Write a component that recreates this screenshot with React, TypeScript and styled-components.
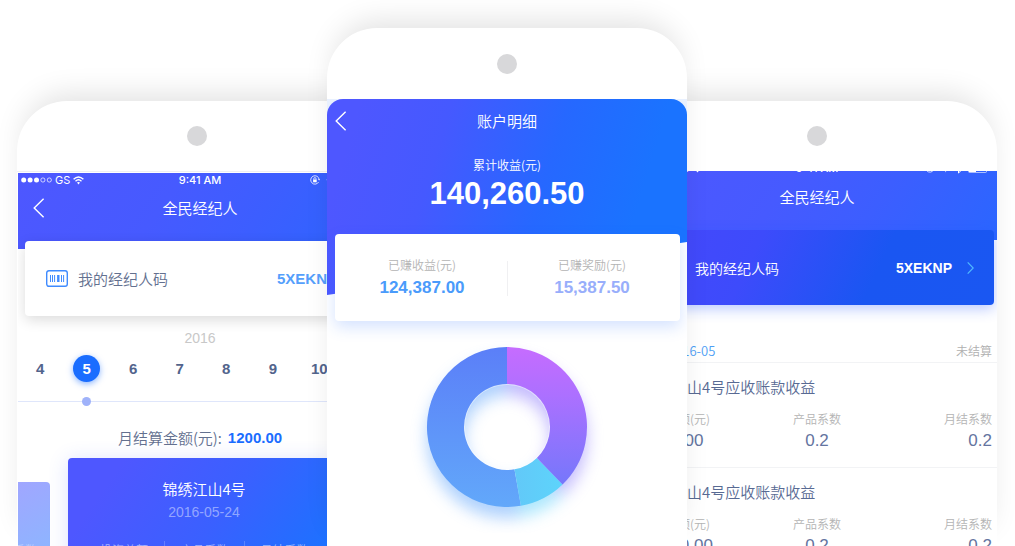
import React from "react";
import styled, { createGlobalStyle, css } from "styled-components";

const cjk = `"Noto Sans CJK SC", sans-serif`;
const latin = `"Liberation Sans", "Noto Sans CJK SC", sans-serif`;

const GlobalStyle = createGlobalStyle`
  *, *::before, *::after { box-sizing: border-box; }
  body {
    margin: 0;
    background: #fff;
    font-family: ${cjk};
    font-weight: 350;
    color: #586a93;
  }
  button { font: inherit; color: inherit; border: 0; padding: 0; background: none; cursor: pointer; }
  h2, h3, p, dl, dt, dd, ul { margin: 0; padding: 0; font-weight: inherit; }
  svg { display: block; }
`;

const Stage = styled.main`
  display: flex;
  height: 100vh;
  padding: 0 18px 0 17px;
  overflow: hidden;
`;

const Phone = styled.section<{ $front?: boolean }>`
  flex: 1 1 0;
  min-width: 0;
  margin-top: ${(p) => (p.$front ? 28 : 101)}px;
  border-radius: 50px 50px 0 0;
  background: #fff;
  box-shadow: 0 -14px 30px -8px rgba(0, 0, 0, 0.12);
  ${(p) =>
    p.$front &&
    css`
      position: relative;
      z-index: 1;
      margin-left: -50px;
      margin-right: -50px;
    `}
`;

const Bezel = styled.div<{ $height: number; $top: number; $line?: boolean }>`
  height: ${(p) => p.$height}px;
  padding-top: ${(p) => p.$top}px;
  ${(p) => p.$line && "border-bottom: 1px solid #efeff2; margin-bottom: 1px;"}
`;

const Camera = styled.div`
  width: 20px;
  height: 20px;
  margin: 0 auto;
  border-radius: 50%;
  background: #d8d8da;
`;

const Screen = styled.div<{ $wide?: boolean }>`
  overflow: hidden;
  height: 100%;
  margin: ${(p) => (p.$wide ? "0 -5px 0 1px" : "0")};
`;

const Hero = styled.header<{ $bottom: number }>`
  padding-bottom: ${(p) => p.$bottom}px;
  color: #fff;
  background: linear-gradient(125deg, #4e57ff 0%, #465aff 40%, #3c5eff 65%, #2b66ff 100%);
`;

const AccountScreen = styled(Screen)`
  background: linear-gradient(#e8f0fe 20px, #fff 20px);
`;

const AccountHero = styled.header`
  min-height: 196px;
  border-radius: 16px 16px 0 0;
  color: #fff;
  text-align: center;
  background: linear-gradient(107deg, #4e57ff 8%, #4559ff 30%, #2668ff 58%, #1a73ff 82%);
  clip-path: polygon(0 0, 100% 0, 100% 73%, 0 100%);
`;

const StatusBar = styled.div<{ $raised?: boolean }>`
  display: grid;
  grid-template-columns: 1fr auto 1fr;
  align-items: center;
  height: 14px;
  margin-top: ${(p) => (p.$raised ? -10 : 0)}px;
  padding: 0 3px;
  font: 500 11px/14px Inter, sans-serif;
`;

const StatusGroup = styled.div`
  display: flex;
  align-items: center;
  gap: 3px;
  font-weight: 400;
`;

const StatusIcons = styled.div`
  display: flex;
  align-items: center;
  justify-content: flex-end;
  gap: 6px;
  padding-right: 5px;
`;

const NavBar = styled.div<{ $height: number }>`
  display: grid;
  grid-template-columns: 40px 1fr 40px;
  align-items: center;
  height: ${(p) => p.$height}px;
  font-size: 15px;
  text-align: center;
`;

const NavTitle = styled.h2`
  grid-column: 2;
  font-size: 15px;
  line-height: 22px;
`;

const BackButton = styled.button<{ $inset: number }>`
  grid-column: 1;
  padding-left: ${(p) => p.$inset}px;
`;

const TotalLabel = styled.p`
  margin-top: 14px;
  font-size: 12px;
  line-height: 16px;
`;

const TotalAmount = styled.p`
  margin-top: 5px;
  font: 700 31px/32px ${latin};
`;

const SplitCard = styled.div`
  position: relative;
  display: grid;
  grid-template-columns: 1fr 1px 1fr;
  align-items: center;
  margin: -61px 7px 0 8px;
  padding: 22px 0 21px;
  border-radius: 4px;
  background: #fff;
  text-align: center;
  box-shadow: 0 6px 16px rgba(40, 110, 255, 0.2);

  div:first-child { padding-left: 2px; }
  div:last-child { padding-right: 4px; }
`;

const Divider = styled.span`
  height: 35px;
  background: #f0f0f2;
`;

const EarningLabel = styled.p`
  font-size: 12px;
  line-height: 18px;
  color: #b4b4b4;
`;

const EarningValue = styled.p<{ $color: string }>`
  margin-top: 2px;
  font: 700 17px/24px ${latin};
  color: ${(p) => p.$color};
`;

const ChartArea = styled.div`
  display: flex;
  justify-content: center;
`;

const CodeCard = styled.div<{ $dark?: boolean }>`
  position: relative;
  display: flex;
  align-items: center;
  height: 75px;
  border-radius: 4px;
  ${(p) =>
    p.$dark
      ? css`
          gap: 15px;
          margin: -10px 3px 0;
          padding: 0 20px 0 18px;
          color: #fff;
          font-size: 14px;
          background: linear-gradient(115deg, #4349fb 12%, #3d4bfb 32%, #1a56f2 66%, #1a57f2 100%);
          box-shadow: 0 4px 14px rgba(30, 80, 255, 0.3);
        `
      : css`
          gap: 10px;
          margin: -8px 7px 0;
          padding: 0 21px;
          color: #63708f;
          font-size: 15px;
          background: #fff;
          box-shadow: 0 4px 14px rgba(0, 0, 0, 0.14);
        `}
`;

const CodeValue = styled.strong<{ $color: string; $size: number }>`
  margin-left: auto;
  font: 700 ${(p) => p.$size}px/20px ${latin};
  color: ${(p) => p.$color};
`;

const Year = styled.p`
  margin-top: 12px;
  font: 400 14px/20px ${latin};
  text-align: center;
  color: #c8c8c8;
`;

const monthGrid = css`
  display: grid;
  grid-template-columns: repeat(9, 1fr);
  width: 115%;
  margin-left: -1px;
  justify-items: center;
`;

const Months = styled.div`
  ${monthGrid}
  margin-top: 7px;
`;

const Month = styled.button<{ $active?: boolean }>`
  width: 27px;
  height: 27px;
  border-radius: 50%;
  font: 700 15px/28px ${latin};
  color: #52648c;
  ${(p) =>
    p.$active &&
    css`
      color: #fff;
      background: #1a6dff;
      box-shadow: 0 2px 6px rgba(26, 109, 255, 0.5);
    `}
`;

const Timeline = styled.div`
  ${monthGrid}
  margin-top: 15px;
  background: linear-gradient(#dfe6fb, #dfe6fb) 0 4px / 100% 1px no-repeat;
`;

const TimelineDot = styled.span`
  grid-column: 2;
  width: 9px;
  height: 9px;
  border-radius: 50%;
  background: #9fb2fa;
`;

const Settlement = styled.p`
  display: flex;
  justify-content: center;
  gap: 6px;
  margin-top: 20px;
  font-size: 15px;
  line-height: 24px;
  color: #63708f;

  strong {
    font: 700 15px/24px ${latin};
    color: #1a6dff;
  }
`;

const Carousel = styled.div`
  display: flex;
  gap: 18px;
  margin-top: 8px;
`;

const PreviousProject = styled.article`
  display: flex;
  justify-content: flex-end;
  flex: 0 0 32px;
  min-width: 0;
  margin-top: 24px;
  padding: 59px 13px 0 0;
  border-radius: 0 4px 4px 0;
  font-size: 12px;
  line-height: 18px;
  white-space: nowrap;
  color: rgba(255, 255, 255, 0.4);
  background: linear-gradient(150deg, #a0a6ff, #8cb6ff 60%);
`;

const Project = styled.article`
  flex: 0 0 268px;
  min-height: 160px;
  padding: 20px 12px 0 16px;
  border-radius: 4px;
  text-align: center;
  color: #fff;
  background: linear-gradient(125deg, #4e57ff 15%, #3a60ff 50%, #1a73ff 88%);
  box-shadow: 0 2px 20px rgba(60, 90, 255, 0.18);
`;

const ProjectName = styled.h3`
  font-size: 15px;
  line-height: 22px;
`;

const ProjectDate = styled.p`
  margin-top: 2px;
  font: 400 14px/20px ${latin};
  color: rgba(255, 255, 255, 0.45);
`;

const ProjectFacts = styled.ul`
  display: grid;
  grid-template-columns: repeat(3, 1fr);
  margin-top: 19px;
  font-size: 12px;
  line-height: 18px;
  list-style: none;
  color: rgba(255, 255, 255, 0.55);

  li + li {
    border-left: 1px solid rgba(255, 255, 255, 0.2);
  }
`;

const PeriodRow = styled.div`
  display: flex;
  justify-content: space-between;
  height: 24px;
  margin-top: 34px;
  padding: 0 5px 0 31px;
  border-bottom: 1px solid #f2f3f5;
  font-size: 13px;
  line-height: 24px;
  color: #4f9ff5;
`;

const PeriodState = styled.span`
  font-size: 12px;
  color: #b0b0b0;
`;

const Income = styled.article`
  padding: 13px 5px 15px;
  border-bottom: 1px solid #f2f3f5;
`;

const IncomeName = styled.h3`
  font-size: 15px;
  line-height: 22px;
`;

const IncomeFacts = styled.dl`
  display: grid;
  grid-template-columns: repeat(3, 1fr);
  margin-top: 12px;

  div { text-align: center; }
  div:first-child { text-align: left; }
  div:last-child { text-align: right; }
  dt { font-size: 12px; line-height: 18px; color: #b4b4b4; }
  dd { margin-top: 2px; font: 400 17px/22px ${latin}; color: #6474a0; }
`;

const ChevronLeft = () => (
  <svg width="12" height="20" viewBox="0 0 12 20" fill="none" stroke="#fff" strokeWidth="1.4">
    <path d="M10.6 0.7 L1.2 10 L10.6 19.3" />
  </svg>
);

const ChevronRight = () => (
  <svg width="7" height="12" viewBox="0 0 7 12" fill="none" stroke="#4fb8ff" strokeWidth="1.2">
    <path d="M0.7 0.4 L6.2 6 L0.7 11.6" />
  </svg>
);

const SignalDots = () => (
  <svg width="31" height="6" viewBox="0 0 31 6" fill="#fff" stroke="#fff">
    {[0, 1, 2, 3, 4].map((i) =>
      i < 3 ? (
        <circle key={i} cx={2.7 + i * 6.4} cy="3" r="2.5" stroke="none" />
      ) : (
        <circle key={i} cx={2.7 + i * 6.4} cy="3" r="2.1" fill="none" strokeWidth="0.7" />
      )
    )}
  </svg>
);

const Wifi = () => (
  <svg width="11" height="9" viewBox="0 0 11 9" fill="none" stroke="#fff" strokeWidth="1.4">
    <path d="M0.6 3.2 Q5.5 -1.4 10.4 3.2" />
    <path d="M2.5 5.2 Q5.5 2.4 8.5 5.2" />
    <path d="M4 6.6 Q5.5 5.4 7 6.6 L5.5 8.4 Z" fill="#fff" stroke="none" />
  </svg>
);

const RotationLock = () => (
  <svg width="10" height="10" viewBox="0 0 10 10" fill="none" stroke="#fff" strokeWidth="0.8">
    <path d="M8.6 7 A4.2 4.2 0 1 1 9.1 4.4" />
    <path d="M7.9 4.2 L9.2 5.6 L10 4" fill="#fff" stroke="none" />
    <rect x="3.1" y="4.5" width="3.6" height="2.8" fill="#fff" stroke="none" />
    <path d="M3.8 4.6 V3.7 A1.1 1.1 0 0 1 6 3.7 V4.6" />
  </svg>
);

const LocationArrow = () => (
  <svg width="8" height="9" viewBox="0 0 8 9" fill="#fff">
    <path d="M8 0.5 L4.6 8.6 L4 4.6 L0 4 Z" />
  </svg>
);

const Bluetooth = () => (
  <svg width="7" height="11" viewBox="0 0 7 11" fill="none" stroke="#fff" strokeWidth="1">
    <path d="M1 3 L6 7.6 L3.5 10 V0.9 L6 3.3 L1 8" />
  </svg>
);

const Battery = () => (
  <svg width="21" height="9" viewBox="0 0 21 9" fill="none" stroke="#fff" strokeWidth="0.6">
    <rect x="0.5" y="0.5" width="18" height="8" rx="1" />
    <rect x="1" y="1" width="7" height="7" fill="#fff" stroke="none" />
    <path d="M19.8 3 V6" />
  </svg>
);

const Barcode = ({ color }: { color: string }) => (
  <svg width="22" height="17" viewBox="0 0 22 17" fill="none" stroke={color}>
    <rect x="0.7" y="0.7" width="20.6" height="15.6" rx="2.2" strokeWidth="1.4" />
    <path d="M4.5 5 V12 M6.5 5 V12 M8.6 5 V12 M15.5 5 V12 M17.6 5 V12" strokeWidth="1" />
    <path d="M12.3 5 V12" strokeWidth="2.4" />
  </svg>
);

const point = (r: number, deg: number) => {
  const a = (deg * Math.PI) / 180;
  return `${(110 + r * Math.sin(a)).toFixed(2)} ${(106 - r * Math.cos(a)).toFixed(2)}`;
};

const arc = (from: number, to: number) => {
  const large = to - from > 180 ? 1 : 0;
  return `M${point(80, from)} A80 80 0 ${large} 1 ${point(80, to)} L${point(43, to)} A43 43 0 ${large} 0 ${point(43, from)} Z`;
};

const Ring = () => (
  <>
    <path d={arc(170, 360)} fill="url(#blue)" />
    <path d={arc(136, 170)} fill="url(#cyan)" />
    <path d={arc(0, 136)} fill="url(#violet)" />
  </>
);

const GlowRing = () => (
  <>
    <path d={arc(170, 360)} fill="#5ea4fb" />
    <path d={arc(136, 170)} fill="#5dd0fb" />
    <path d={arc(0, 136)} fill="#8a78fb" />
  </>
);

const Donut = () => (
  <svg width="220" height="212" viewBox="0 0 220 212" role="img" aria-label="收益">
    <defs>
      <linearGradient id="violet" x1="0" y1="0" x2="0" y2="1">
        <stop offset="0" stopColor="#c66cff" />
        <stop offset="0.35" stopColor="#ac70ff" />
        <stop offset="1" stopColor="#7577fb" />
      </linearGradient>
      <linearGradient id="blue" x1="0" y1="0" x2="0" y2="1">
        <stop offset="0" stopColor="#5b7ff8" />
        <stop offset="1" stopColor="#62a8fa" />
      </linearGradient>
      <linearGradient id="cyan" x1="0" y1="0" x2="1" y2="0">
        <stop offset="0" stopColor="#62c8f8" />
        <stop offset="1" stopColor="#5dd4fb" />
      </linearGradient>
      <filter id="glow" x="-30%" y="-30%" width="160%" height="160%">
        <feGaussianBlur stdDeviation="8" />
      </filter>
    </defs>
    <g filter="url(#glow)" opacity="0.5" transform="translate(0 11)">
      <GlowRing />
    </g>
    <circle cx="110" cy="106" r="43" fill="none" stroke="#fff" strokeOpacity="0.4" strokeWidth="2" />
    <Ring />
  </svg>
);

const months = [4, 5, 6, 7, 8, 9, 10, 11, 12];

const PhoneStatus = ({ raised }: { raised?: boolean }) => (
  <StatusBar $raised={raised}>
    <StatusGroup>
      <SignalDots />
      GS
      <Wifi />
    </StatusGroup>
    9:41 AM
    <StatusIcons>
      <RotationLock />
      <LocationArrow />
      <Bluetooth />
      <Battery />
    </StatusIcons>
  </StatusBar>
);

const BrokerPhone = () => (
  <Phone>
    <Bezel $height={71} $top={25} $line>
      <Camera />
    </Bezel>
    <Screen $wide>
      <Hero $bottom={20}>
        <PhoneStatus />
        <NavBar $height={42}>
          <BackButton $inset={15} aria-label="返回">
            <ChevronLeft />
          </BackButton>
          <NavTitle>全民经纪人</NavTitle>
        </NavBar>
      </Hero>
      <CodeCard>
        <Barcode color="#3f8bff" />
        我的经纪人码
        <CodeValue $color="#559ffc" $size={15}>5XEKNP</CodeValue>
        <ChevronRight />
      </CodeCard>
      <Year>2016</Year>
      <Months>
        {months.map((m) => (
          <Month key={m} $active={m === 5}>
            {m}
          </Month>
        ))}
      </Months>
      <Timeline>
        <TimelineDot />
      </Timeline>
      <Settlement>
        月结算金额(元): <strong>1200.00</strong>
      </Settlement>
      <Carousel>
        <PreviousProject>月结系数</PreviousProject>
        <Project>
          <ProjectName>锦绣江山4号</ProjectName>
          <ProjectDate>2016-05-24</ProjectDate>
          <ProjectFacts>
            <li>投资总额</li>
            <li>产品系数</li>
            <li>月结系数</li>
          </ProjectFacts>
        </Project>
      </Carousel>
    </Screen>
  </Phone>
);

const AccountPhone = () => (
  <Phone $front>
    <Bezel $height={71} $top={26}>
      <Camera />
    </Bezel>
    <AccountScreen>
      <AccountHero>
        <NavBar $height={44}>
          <BackButton $inset={8} aria-label="返回">
            <ChevronLeft />
          </BackButton>
          <NavTitle>账户明细</NavTitle>
        </NavBar>
        <TotalLabel>累计收益(元)</TotalLabel>
        <TotalAmount>140,260.50</TotalAmount>
      </AccountHero>
      <SplitCard>
        <div>
          <EarningLabel>已赚收益(元)</EarningLabel>
          <EarningValue $color="#4a9bfb">124,387.00</EarningValue>
        </div>
        <Divider />
        <div>
          <EarningLabel>已赚奖励(元)</EarningLabel>
          <EarningValue $color="#98aefb">15,387.50</EarningValue>
        </div>
      </SplitCard>
      <ChartArea>
        <Donut />
      </ChartArea>
    </AccountScreen>
  </Phone>
);

const incomes = [
  { name: "锦绣江山4号应收账款收益", total: "1000.00" },
  { name: "锦绣江山4号应收账款收益", total: "10000.00" },
];

const IncomePhone = () => (
  <Phone>
    <Bezel $height={70} $top={25}>
      <Camera />
    </Bezel>
    <Screen>
      <Hero $bottom={21}>
        <PhoneStatus raised />
        <NavBar $height={44}>
          <NavTitle>全民经纪人</NavTitle>
        </NavBar>
      </Hero>
      <CodeCard $dark>
        <Barcode color="#fff" />
        我的经纪人码
        <CodeValue $color="#fff" $size={14}>5XEKNP</CodeValue>
        <ChevronRight />
      </CodeCard>
      <PeriodRow>
        2016-05
        <PeriodState>未结算</PeriodState>
      </PeriodRow>
      {incomes.map((item) => (
        <Income key={item.total}>
          <IncomeName>{item.name}</IncomeName>
          <IncomeFacts>
            <div>
              <dt>投资总额(元)</dt>
              <dd>{item.total}</dd>
            </div>
            <div>
              <dt>产品系数</dt>
              <dd>0.2</dd>
            </div>
            <div>
              <dt>月结系数</dt>
              <dd>0.2</dd>
            </div>
          </IncomeFacts>
        </Income>
      ))}
    </Screen>
  </Phone>
);

export default function App() {
  return (
    <>
      <GlobalStyle />
      <Stage>
        <BrokerPhone />
        <AccountPhone />
        <IncomePhone />
      </Stage>
    </>
  );
}
